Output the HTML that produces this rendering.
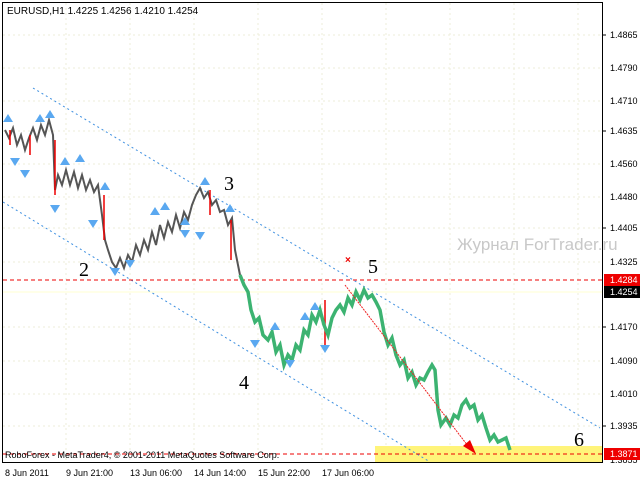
<!DOCTYPE html>
<html><head><style>
body{margin:0;background:#fff;width:640px;height:480px;overflow:hidden;font-family:"Liberation Sans",sans-serif}
svg{display:block}
</style></head><body>
<svg width="640" height="480" xmlns="http://www.w3.org/2000/svg" font-family="Liberation Sans, sans-serif">
<rect width="640" height="480" fill="#fff"/>
<g stroke="#eeeed8" stroke-dasharray="2,3" stroke-width="1">
<line x1="66" y1="3" x2="66" y2="462"/><line x1="130" y1="3" x2="130" y2="462"/><line x1="194" y1="3" x2="194" y2="462"/><line x1="258" y1="3" x2="258" y2="462"/><line x1="322" y1="3" x2="322" y2="462"/><line x1="386" y1="3" x2="386" y2="462"/><line x1="450" y1="3" x2="450" y2="462"/><line x1="514" y1="3" x2="514" y2="462"/><line x1="578" y1="3" x2="578" y2="462"/>
<line x1="3" y1="35" x2="602" y2="35"/><line x1="3" y1="68" x2="602" y2="68"/><line x1="3" y1="101" x2="602" y2="101"/><line x1="3" y1="131" x2="602" y2="131"/><line x1="3" y1="164" x2="602" y2="164"/><line x1="3" y1="197" x2="602" y2="197"/><line x1="3" y1="228" x2="602" y2="228"/><line x1="3" y1="262" x2="602" y2="262"/><line x1="3" y1="327" x2="602" y2="327"/><line x1="3" y1="361" x2="602" y2="361"/><line x1="3" y1="394" x2="602" y2="394"/><line x1="3" y1="426" x2="602" y2="426"/>
</g>
<rect x="375" y="446" width="227" height="16" fill="#fff47a"/>
<rect x="2.5" y="2.5" width="600" height="460" fill="none" stroke="#000"/>
<g stroke="#3d8fe0" stroke-dasharray="2,3" fill="none">
<line x1="33" y1="88" x2="600" y2="428"/>
<line x1="3" y1="202" x2="430" y2="462"/>
</g>
<line x1="3" y1="280" x2="602" y2="280" stroke="#e00" stroke-dasharray="4,3"/>
<line x1="3" y1="454" x2="602" y2="454" stroke="#e00" stroke-dasharray="4,3"/>
<line x1="3" y1="292" x2="602" y2="292" stroke="#ffffd0"/>
<polyline fill="none" stroke="#555" stroke-width="2" points="5,130 9,138 13,128 17,145 21,135 25,150 29,138 33,128 37,140 41,125 45,135 49,120 53,135 55,190 58,175 62,185 66,170 70,185 74,172 78,188 82,175 86,190 90,180 94,192 98,185 102,215 105,240 108,250 112,262 116,268 120,258 124,268 128,255 132,262 136,245 140,255 144,240 148,250 152,232 156,245 160,225 164,238 168,222 172,232 176,215 180,228 184,212 188,220 192,205 196,195 200,188 204,198 208,192 212,205 216,200 220,212 224,210 228,225 232,218 235,250 238,265 240,275"/>
<g stroke="#e00" stroke-width="1.5"><line x1="10" y1="130" x2="10" y2="145"/><line x1="30" y1="135" x2="30" y2="155"/><line x1="55" y1="140" x2="55" y2="195"/><line x1="104" y1="195" x2="104" y2="240"/><line x1="210" y1="190" x2="210" y2="215"/><line x1="231" y1="220" x2="231" y2="260"/><line x1="325" y1="300" x2="325" y2="345"/></g>
<polyline fill="none" stroke="#3cb371" stroke-width="3.5" points="240,275 244,285 248,292 251,310 255,322 259,318 263,335 268,340 272,332 276,352 280,345 284,365 288,355 292,360 296,345 300,350 304,330 308,335 312,315 316,322 320,310 324,325 328,335 332,318 336,310 340,305 344,312 348,298 352,305 356,292 360,300 364,290 368,298 372,295 376,302 380,310 384,332 388,345 392,338 396,355 400,365 404,360 408,378 412,372 416,385 420,378 424,380 428,372 432,365 435,370 438,410 441,425 446,418 450,425 454,415 458,418 462,405 466,400 470,408 474,405 478,420 482,415 486,428 490,440 494,435 498,442 502,440 506,438 510,450"/>
<line x1="345" y1="285" x2="468" y2="446" stroke="#e22" stroke-width="1" stroke-dasharray="2,1"/>
<polygon points="463,446 476,454 470,440" fill="#e00"/>
<text x="345" y="263" fill="#e00" font-size="10" font-weight="bold">×</text>
<g fill="#5aa8f0">
<path d="M3,122 l5,-8 l5,8 z"/><path d="M35,122 l5,-8 l5,8 z"/><path d="M45,118 l5,-8 l5,8 z"/><path d="M60,165 l5,-8 l5,8 z"/><path d="M75,162 l5,-8 l5,8 z"/><path d="M100,190 l5,-8 l5,8 z"/><path d="M150,215 l5,-8 l5,8 z"/><path d="M160,210 l5,-8 l5,8 z"/><path d="M200,185 l5,-8 l5,8 z"/><path d="M180,225 l5,-8 l5,8 z"/><path d="M225,212 l5,-8 l5,8 z"/><path d="M270,330 l5,-8 l5,8 z"/><path d="M300,320 l5,-8 l5,8 z"/><path d="M310,310 l5,-8 l5,8 z"/>
<path d="M10,158 l5,8 l5,-8 z"/><path d="M20,170 l5,8 l5,-8 z"/><path d="M50,205 l5,8 l5,-8 z"/><path d="M88,220 l5,8 l5,-8 z"/><path d="M110,268 l5,8 l5,-8 z"/><path d="M125,260 l5,8 l5,-8 z"/><path d="M180,230 l5,8 l5,-8 z"/><path d="M195,232 l5,8 l5,-8 z"/><path d="M250,340 l5,8 l5,-8 z"/><path d="M285,360 l5,8 l5,-8 z"/><path d="M320,345 l5,8 l5,-8 z"/>
</g>
<g font-family="Liberation Serif, serif" font-size="20" fill="#000">
<text x="224" y="190">3</text><text x="79" y="276">2</text><text x="368" y="273">5</text><text x="239" y="389">4</text><text x="574" y="446">6</text>
</g>
<text x="457" y="250" font-size="17" fill="#c8c8c8">Журнал ForTrader.ru</text>
<text x="7" y="14" font-size="10" fill="#000">EURUSD,H1  1.4225 1.4256 1.4210 1.4254</text>
<text x="5" y="458" font-size="9" fill="#000">RoboForex - MetaTrader4, © 2001-2011 MetaQuotes Software Corp.</text>
<g font-size="9" fill="#000">
<text x="610" y="38">1.4865</text><text x="610" y="71">1.4790</text><text x="610" y="104">1.4710</text><text x="610" y="134">1.4635</text><text x="610" y="167">1.4560</text><text x="610" y="200">1.4480</text><text x="610" y="231">1.4405</text><text x="610" y="265">1.4325</text><text x="610" y="330">1.4170</text><text x="610" y="364">1.4090</text><text x="610" y="397">1.4010</text><text x="610" y="429">1.3935</text><text x="610" y="463">1.3855</text>
</g>
<g stroke="#000"><line x1="603" y1="35" x2="606" y2="35"/><line x1="603" y1="131" x2="606" y2="131"/><line x1="603" y1="228" x2="606" y2="228"/><line x1="603" y1="327" x2="606" y2="327"/><line x1="603" y1="426" x2="606" y2="426"/></g>
<rect x="604" y="274" width="36" height="12" fill="#e00"/><text x="610" y="283" font-size="9" fill="#fff">1.4284</text>
<rect x="604" y="286" width="36" height="12" fill="#000"/><text x="610" y="295" font-size="9" fill="#fff">1.4254</text>
<rect x="604" y="448" width="36" height="12" fill="#e00"/><text x="610" y="457" font-size="9" fill="#fff">1.3871</text>
<g font-size="9" fill="#000">
<text x="5" y="476">8 Jun 2011</text><text x="66" y="476">9 Jun 21:00</text><text x="130" y="476">13 Jun 06:00</text><text x="194" y="476">14 Jun 14:00</text><text x="258" y="476">15 Jun 22:00</text><text x="322" y="476">17 Jun 06:00</text>
</g>
</svg>
</body></html>
